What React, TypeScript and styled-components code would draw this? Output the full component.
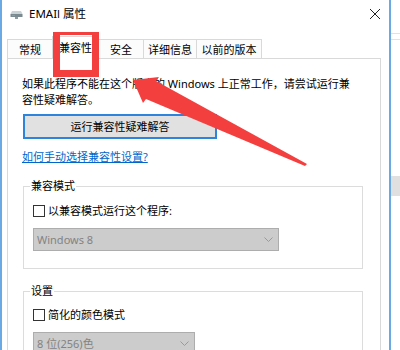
import React from "react";
import styled, { createGlobalStyle } from "styled-components";

const Global = createGlobalStyle`
  html, body { margin: 0; padding: 0; background: #fff; }
  body { font-family: "Noto Sans", "Noto Sans CJK SC", sans-serif; color: #000; }
  * { box-sizing: border-box; }
`;

const Screen = styled.div`
  position: relative;
  width: 400px;
  height: 350px;
  overflow: hidden;
  display: flex;
  background: #fff;
`;

const Window = styled.div`
  width: 391px;
  flex: none;
  border-left: 2px solid #6aa9e3;
  border-right: 2px solid #6aa9e3;
  display: flex;
  flex-direction: column;
  background: #fff;
`;

const TitleBar = styled.div`
  height: 28px;
  flex: none;
  display: flex;
  align-items: center;
  padding-left: 8px;
  padding-right: 9px;
`;

const TitleText = styled.span`
  margin-left: 6px;
  font-size: 11.5px;
  line-height: 16px;
  color: #000;
`;

const CloseBox = styled.div`
  margin-left: auto;
  width: 10px;
  height: 10px;
  display: flex;
`;

const TabStrip = styled.div`
  height: 30px;
  flex: none;
  display: flex;
  align-items: flex-end;
  padding-left: 5px;
  position: relative;
  z-index: 1;
`;

const Tab = styled.div<{ $w: number; $active?: boolean }>`
  width: ${(p) => p.$w}px;
  height: ${(p) => (p.$active ? 23 : 19)}px;
  margin-bottom: ${(p) => (p.$active ? -1 : 0)}px;
  margin-left: -1px;
  &:first-child { margin-left: 0; }
  border: 1px solid #d9d9d9;
  border-bottom: none;
  background: ${(p) => (p.$active ? "#fff" : "#fcfcfc")};
  display: flex;
  align-items: center;
  justify-content: center;
  padding-top: ${(p) => (p.$active ? 0 : 1)}px;
  font-size: 11px;
  line-height: 16px;
  white-space: nowrap;
`;

const Panel = styled.div`
  flex: 1;
  margin: 0 8px 0 5px;
  border: 1px solid #d9d9d9;
  border-bottom: none;
  padding: 17px 16px 0 14px;
  display: flex;
  flex-direction: column;
  align-items: flex-start;
  background: #fff;
`;

const Description = styled.p`
  margin: 0;
  font-size: 11px;
  line-height: 16px;
  white-space: nowrap;
`;

const Button = styled.div`
  margin: 6px 0 0 1px;
  width: 194px;
  height: 25px;
  border: 2px solid #2c84dc;
  background: #e1e1e1;
  display: flex;
  align-items: center;
  justify-content: center;
  font-size: 11px;
  line-height: 16px;
`;

const Link = styled.a`
  margin-top: 10px;
  font-size: 11px;
  line-height: 16px;
  color: #0066cc;
  text-decoration: underline;
`;

const Group = styled.fieldset<{ $gap: number }>`
  margin: ${(p) => p.$gap}px 0 0 1px;
  width: 340px;
  border: 1px solid #dcdcdc;
  padding: 0 0 17px 9px;
  min-width: 0;
`;

const Legend = styled.legend`
  margin-left: -3px;
  padding: 0 1px;
  font-size: 11px;
  line-height: 16px;
`;

const CheckRow = styled.div<{ $top: number }>`
  margin-top: ${(p) => p.$top}px;
  height: 16px;
  display: flex;
  align-items: center;
  gap: 3px;
  font-size: 11px;
  line-height: 16px;
`;

const CheckBox = styled.span`
  width: 12px;
  height: 12px;
  border: 1px solid #333;
  background: #fff;
  flex: none;
`;

const Select = styled.div<{ $w: number }>`
  margin-top: 9px;
  width: ${(p) => p.$w}px;
  height: 23px;
  border: 1px solid #adadad;
  background: #cccccc;
  display: flex;
  align-items: center;
  padding: 0 5px 0 3px;
  color: #838383;
  font-size: 11px;
  line-height: 16px;
`;

const Chevron = styled.svg`
  margin-left: auto;
  flex: none;
`;

const SideStrip = styled.div`
  flex: 1;
  display: flex;
  flex-direction: column;
  background: #fff;
`;

const SideLine = styled.div<{ $top: number }>`
  margin-top: ${(p) => p.$top}px;
  height: 1px;
  background: #e2e2e2;
`;

const SideBlock = styled.div<{ $top: number }>`
  margin-top: ${(p) => p.$top}px;
  height: 20px;
  background: #e0e0e0;
`;

const Overlay = styled.svg`
  position: absolute;
  left: 0;
  top: 0;
  pointer-events: none;
  z-index: 5;
`;

const DriveIcon = () => (
  <svg width="13" height="9" viewBox="0 0 13 9">
    <path d="M2 1 H11 L12.5 4 H0.5 Z" fill="#c9d3d6" />
    <rect x="0.5" y="4" width="12" height="3" fill="#7a8a90" />
    <rect x="2" y="5" width="3" height="1" fill="#4fb0c8" />
    <rect x="5" y="7" width="3" height="2" fill="#8d9ba0" />
  </svg>
);

const ChevronIcon = () => (
  <Chevron width="9" height="5" viewBox="0 0 9 5">
    <path d="M0.5 0.5 L4.5 4.5 L8.5 0.5" fill="none" stroke="#9a9a9a" strokeWidth="1" />
  </Chevron>
);

const tabs = [
  { label: "常规", w: 46 },
  { label: "兼容性", w: 47, active: true },
  { label: "安全", w: 46 },
  { label: "详细信息", w: 54 },
  { label: "以前的版本", w: 66 },
];

export default function App() {
  return (
    <>
      <Global />
      <Screen>
        <Window>
          <TitleBar>
            <DriveIcon />
            <TitleText>EMAIl 属性</TitleText>
            <CloseBox>
              <svg width="10" height="10" viewBox="0 0 10 10">
                <path d="M0 0 L10 10 M10 0 L0 10" stroke="#222" strokeWidth="1" />
              </svg>
            </CloseBox>
          </TitleBar>
          <TabStrip>
            {tabs.map((t) => (
              <Tab key={t.label} $w={t.w} $active={t.active}>
                {t.label}
              </Tab>
            ))}
          </TabStrip>
          <Panel>
            <Description>
              如果此程序不能在这个版本的 Windows 上正常工作，请尝试运行兼
              <br />
              容性疑难解答。
            </Description>
            <Button>运行兼容性疑难解答</Button>
            <Link>如何手动选择兼容性设置?</Link>
            <Group $gap={13}>
              <Legend>兼容模式</Legend>
              <CheckRow $top={9}>
                <CheckBox />
                <span>以兼容模式运行这个程序:</span>
              </CheckRow>
              <Select $w={246}>
                <span>Windows 8</span>
                <ChevronIcon />
              </Select>
            </Group>
            <Group $gap={14}>
              <Legend>设置</Legend>
              <CheckRow $top={8}>
                <CheckBox />
                <span>简化的颜色模式</span>
              </CheckRow>
              <Select $w={162}>
                <span>8 位(256)色</span>
                <ChevronIcon />
              </Select>
            </Group>
          </Panel>
        </Window>
        <SideStrip>
          <SideLine $top={33} />
          <SideLine $top={5} />
          <SideBlock $top={136} />
        </SideStrip>
        <Overlay width="400" height="350" viewBox="0 0 400 350">
          <path
            fillRule="evenodd"
            fill="#f43f3f"
            d="M53 32 H99 V77 H53 Z M60 35 H92 V70 H60 Z"
          />
          <path
            fill="#f43f3f"
            d="M133 80 L159 77 L156 81 L307 164 L305 166 L146 99 L143 103 Z"
          />
        </Overlay>
      </Screen>
    </>
  );
}
